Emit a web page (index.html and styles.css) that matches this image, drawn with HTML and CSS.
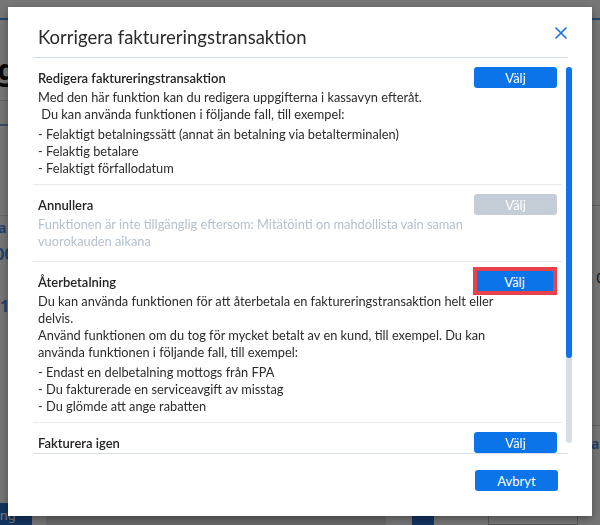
FILE: index.html
```html
<!DOCTYPE html>
<html lang="sv">
<head>
  <meta charset="UTF-8" />
  <meta name="viewport" content="width=device-width, initial-scale=1" />
  <title>Korrigera faktureringstransaktion</title>
  <link rel="stylesheet" href="styles.css">
</head>
<body>
  <!-- kassavyn bakom dialogen -->
  <div class="page">
    <div class="topbar"></div>
    <div class="cols">
      <div class="side side-left">
        <h2 class="bg-title">Fakturering</h2>
        <div class="bg-tabs"></div>
        <div class="bg-filter">Transaktioner &#709;</div>
        <div class="bg-row">
          <span class="bg-link">Korrigera</span>
          <span class="bg-amount">1 200,00</span>
          <span class="bg-muted">Betala</span>
          <span class="bg-amount next">10 400,00</span>
          <span class="bg-muted">Betala</span>
        </div>
      </div>
      <div class="side side-right">
        <div class="bg-cell"></div>
        <div class="bg-cell bg-num">0,00</div>
        <div class="bg-cell bg-link">Visa betalning</div>
      </div>
    </div>
    <div class="bottombar">
      <span class="bg-btn">Lägg till ny betalning</span>
      <span class="bg-block"></span>
      <span class="bg-btn small"></span>
      <span class="bg-box"></span>
    </div>
  </div>

  <div class="backdrop"></div>

  <div class="modal">
    <div class="modal-head">
      <h1>Korrigera faktureringstransaktion</h1>
      <button class="close" aria-label="Stäng">
        <svg width="12" height="12" viewBox="0 0 12 12">
          <path d="M1 1 L11 11 M11 1 L1 11" stroke="#1a73e8" stroke-width="1.7" fill="none" stroke-linecap="round"/>
        </svg>
      </button>
    </div>

    <div class="modal-body">
      <div class="options">
        <div class="option">
          <div class="option-head">
            <h3>Redigera faktureringstransaktion</h3>
            <button class="btn">Välj</button>
          </div>
          <p>Med den här funktion kan du redigera uppgifterna i kassavyn efteråt.<br>&nbsp;Du kan använda funktionen i följande fall, till exempel:</p>
          <ul>
            <li>- Felaktigt betalningssätt (annat än betalning via betalterminalen)</li>
            <li>- Felaktig betalare</li>
            <li>- Felaktigt förfallodatum</li>
          </ul>
        </div>

        <div class="option off">
          <div class="option-head">
            <h3>Annullera</h3>
            <button class="btn" disabled>Välj</button>
          </div>
          <p>Funktionen är inte tillgänglig eftersom: Mitätöinti on mahdollista vain saman vuorokauden aikana</p>
        </div>

        <div class="option">
          <div class="option-head">
            <h3>Återbetalning</h3>
            <button class="btn picked">Välj</button>
          </div>
          <p>Du kan använda funktionen för att återbetala en faktureringstransaktion helt eller delvis.<br>Använd funktionen om du tog för mycket betalt av en kund, till exempel. Du kan använda funktionen i följande fall, till exempel:</p>
          <ul>
            <li>- Endast en delbetalning mottogs från FPA</li>
            <li>- Du fakturerade en serviceavgift av misstag</li>
            <li>- Du glömde att ange rabatten</li>
          </ul>
        </div>

        <div class="option">
          <div class="option-head">
            <h3>Fakturera igen</h3>
            <button class="btn">Välj</button>
          </div>
          <p>Med den här funktionen kan du skicka en ny faktura för samma transaktion.<br>Du kan använda funktionen i följande fall, till exempel:</p>
          <ul>
            <li>- Kunden har inte fått fakturan</li>
            <li>- Fakturan skickades till fel adress</li>
          </ul>
        </div>
      </div>

      <!-- rullningslist -->
      <div class="rail"><div class="thumb"></div></div>
    </div>

    <div class="modal-foot">
      <button class="btn">Avbryt</button>
    </div>
  </div>
</body>
</html>
```

FILE: styles.css
```css
* {
  box-sizing: border-box;
}
html, body {
  margin: 0;
  height: 100%;
}
body {
  font-family: Lato, "Noto Sans", sans-serif;
  color: #2b2b2b;
  background: #fff;
  overflow: hidden;
}

/* bakgrundssidan */
.page {
  height: 100%;
  display: flex;
  flex-direction: column;
  font-family: "Noto Sans", sans-serif;
}
.topbar {
  height: 20px;
  flex: none;
  border-bottom: 2px solid #4a8ee8;
}
.cols {
  flex: 1;
  display: grid;
  grid-template-columns: 1fr 1fr;
}
.side-left {
  margin-left: -128px;
}
.bg-title {
  margin: 30px 0 0 -22px;
  font-size: 28px;
  font-weight: 700;
  color: #111;
}
.bg-tabs {
  height: 26px;
  margin-top: 12px;
  border-top: 1px solid #ddd;
  border-bottom: 2px solid #7da3d8;
}
.bg-filter {
  margin: 58px 0 0 22px;
  color: #4a8ee8;
  font-size: 14px;
  padding-bottom: 12px;
  border-bottom: 1px solid #ddd;
}
.bg-row {
  display: flex;
  flex-direction: column;
  align-items: flex-start;
  gap: 6px;
  padding: 2px 0 0 68px;
}
.bg-link {
  color: #4a8ee8;
  font-weight: 700;
  font-size: 14px;
}
.bg-amount {
  color: #4a8ee8;
  font-weight: 700;
  font-size: 16px;
  margin-left: 10px;
}
.bg-amount.next {
  margin-left: 60px;
}
.bg-muted {
  color: #aaa;
  font-size: 13px;
  margin-left: 22px;
}
.side-right {
  padding-left: 20px;
}
.bg-cell {
  border-bottom: 1px solid #ccc;
  padding: 8px 0;
  font-size: 14px;
}
.bg-cell:first-child {
  height: 186px;
}
.bg-cell.bg-num {
  height: 220px;
  padding-top: 62px;
  text-align: right;
  margin-right: -24px;
  color: #222;
}
.bg-cell.bg-link {
  border: 0;
  text-align: right;
  margin-right: -70px;
}
.bottombar {
  flex: none;
  height: 22px;
  display: flex;
  gap: 14px;
  margin-left: -120px;
}
.bg-btn {
  width: 152px;
  background: #2a6fd0;
  color: #fff;
  font-size: 13px;
  padding: 3px 8px;
  white-space: nowrap;
  overflow: hidden;
}
.bg-btn.small {
  width: 22px;
  margin-left: 12px;
}
.bg-block {
  width: 340px;
  background: #e4e4e4;
}
.bg-box {
  width: 90px;
  border: 1px solid #bbb;
  margin-left: 40px;
}

.backdrop {
  position: fixed;
  inset: 0;
  background: rgba(0, 0, 0, 0.54);
}

/* dialogen */
.modal {
  position: fixed;
  left: 8px;
  top: 7px;
  width: 584px;
  height: 509px;
  background: #fff;
  box-shadow: 0 3px 8px rgba(0, 0, 0, 0.35);
  padding: 0 24px 0 25px;
  display: flex;
  flex-direction: column;
}
.modal-head {
  height: 51px;
  flex: none;
  display: flex;
  align-items: flex-start;
  justify-content: space-between;
  padding: 17px 1px 0 5px;
  border-bottom: 1px solid #d3dbe4;
}
.modal-head h1 {
  margin: 0;
  font-size: 18.5px;
  line-height: 26px;
  font-weight: 400;
  color: #2a2a2a;
}
.close {
  margin-top: 3px;
  padding: 0;
  border: 0;
  background: none;
  width: 12px;
  height: 12px;
  line-height: 0;
  cursor: pointer;
}

.modal-body {
  flex: 1;
  min-height: 0;
  display: flex;
  margin-right: -4px;
}
.options {
  flex: 1;
  overflow: hidden;
}
.rail {
  flex: none;
  width: 6px;
  margin: 9px 0 10px 4px;
  border-radius: 3px;
  background: #d6dee6;
}
.thumb {
  height: 291px;
  border-radius: 3px;
  background: #0a74e8;
}

.option {
  padding: 9px 5px 7px;
  border-bottom: 1px solid #e6eaef;
}
.option-head {
  display: flex;
  align-items: center;
  justify-content: space-between;
  height: 21px;
}
.option h3 {
  margin: 0;
  font-size: 13px;
  font-weight: 600;
  color: #222;
}
.option p,
.option ul {
  margin: 1px 62px 0 0;
  font-size: 12.8px;
  line-height: 17px;
}
.option ul {
  list-style: none;
  padding: 0;
  margin-top: 3px;
}
.option.off p {
  color: #b5c1cc;
  margin-bottom: 4px;
}

.btn {
  flex: none;
  width: 83px;
  height: 21px;
  padding: 0;
  border: none;
  border-radius: 3px;
  background: #0b74e8;
  color: #fff;
  font-family: Lato, "Noto Sans", sans-serif;
  font-size: 13px;
  cursor: pointer;
}
.btn:disabled {
  background: #c5cdd6;
  cursor: default;
}
.btn.picked {
  position: relative;
  margin-right: 2px;
  width: 81px;
}
.btn.picked::after {
  content: "";
  position: absolute;
  top: -4px;
  left: -1px;
  right: -2px;
  bottom: -3px;
  border: 4px solid #e8434d;
}

.modal-foot {
  height: 63px;
  flex: none;
  display: flex;
  justify-content: flex-end;
  align-items: flex-start;
  padding: 16px 10px 0 0;
  border-top: 1px solid #d6dde5;
}
```
